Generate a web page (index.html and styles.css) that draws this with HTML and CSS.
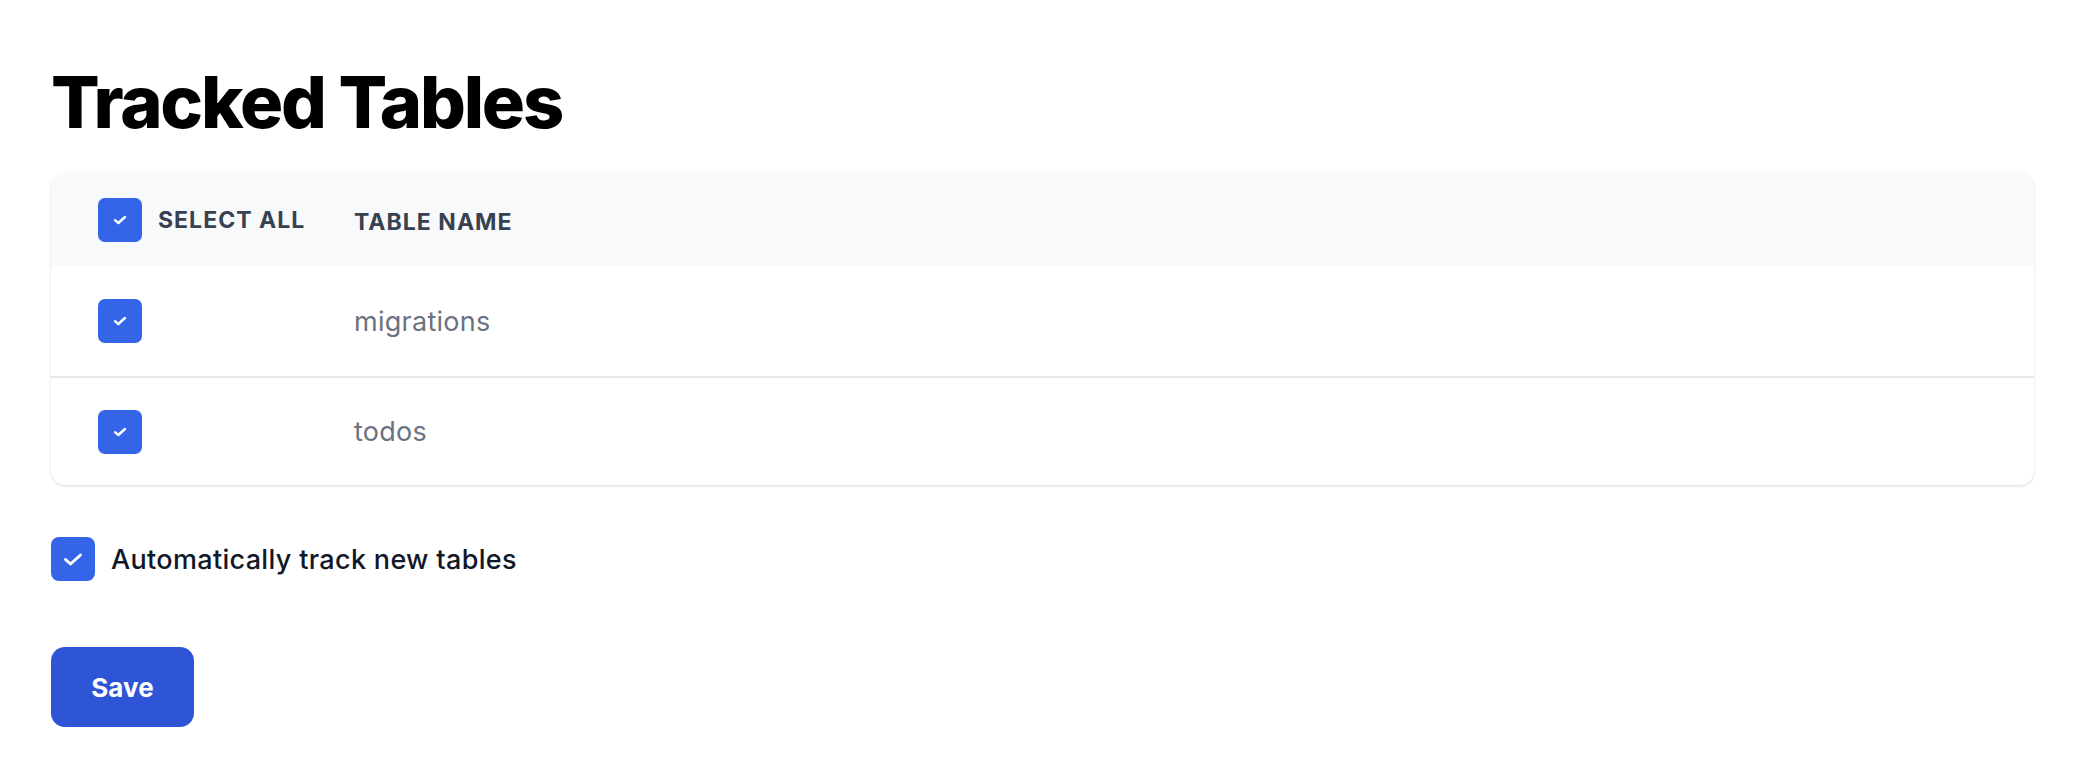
FILE: index.html
```html
<!DOCTYPE html>
<html lang="en">
<head>
<meta charset="utf-8">
<title>Tracked Tables</title>
<link rel="stylesheet" href="styles.css">
</head>
<body>
<main class="page">
  <h1 class="title">Tracked Tables</h1>
  <div class="card">
    <div class="row head">
      <div class="cell first">
        <span class="box small"><svg viewBox="0 0 14 10" width="14" height="10"><path d="M2 5.2 L5.3 8 L12 2" fill="none" stroke="#fff" stroke-width="2.4" stroke-linecap="round" stroke-linejoin="round"/></svg></span>
        <span class="head-label">SELECT ALL</span>
      </div>
      <div class="cell head-label name">TABLE NAME</div>
    </div>
    <div class="row">
      <div class="cell first">
        <span class="box small"><svg viewBox="0 0 14 10" width="14" height="10"><path d="M2 5.2 L5.3 8 L12 2" fill="none" stroke="#fff" stroke-width="2.4" stroke-linecap="round" stroke-linejoin="round"/></svg></span>
      </div>
      <div class="cell value">migrations</div>
    </div>
    <div class="row">
      <div class="cell first">
        <span class="box small"><svg viewBox="0 0 14 10" width="14" height="10"><path d="M2 5.2 L5.3 8 L12 2" fill="none" stroke="#fff" stroke-width="2.4" stroke-linecap="round" stroke-linejoin="round"/></svg></span>
      </div>
      <div class="cell value">todos</div>
    </div>
  </div>
  <label class="auto">
    <span class="box big"><svg viewBox="0 0 20 15" width="20" height="15"><path d="M2.5 7.5 L7.5 12 L17.5 3" fill="none" stroke="#fff" stroke-width="3" stroke-linecap="round" stroke-linejoin="round"/></svg></span>
    <span class="auto-text">Automatically track new tables</span>
  </label>
  <button class="save" type="button">Save</button>
</main>
</body>
</html>
```
FILE: styles.css
```css
html, body {
  margin: 0;
  background: #ffffff;
}
body {
  font-family: Inter, "Noto Sans", sans-serif;
  -webkit-font-smoothing: antialiased;
}
.page {
  padding: 62px 54px 0 51px;
  display: flex;
  flex-direction: column;
  align-items: flex-start;
}
.title {
  margin: 0;
  font-size: 72px;
  line-height: 80px;
  font-weight: 800;
  letter-spacing: -0.03em;
  color: #000;
}
.card {
  align-self: stretch;
  margin-top: 31px;
  background: #fff;
  border-radius: 14px;
  box-shadow: 0 1px 3px rgba(0,0,0,0.10), 0 1px 2px rgba(0,0,0,0.05);
  overflow: hidden;
}
.row {
  display: grid;
  grid-template-columns: 303px 1fr;
  align-items: center;
  height: 107px;
}
.row + .row {
  border-top: 2px solid #e5e7eb;
}
.row.head {
  height: 93px;
  background: #f8f9fb;
}
.row.head + .row {
  border-top: 0;
  height: 110px;
}
.cell.first {
  display: flex;
  align-items: center;
  gap: 16px;
  padding-left: 47px;
}
.box {
  display: inline-flex;
  align-items: center;
  justify-content: center;
  width: 44px;
  height: 44px;
  border-radius: 7px;
  background: #3465e8;
  flex: none;
}
.head-label {
  font-size: 23px;
  font-weight: 700;
  letter-spacing: 0.045em;
  color: #374151;
}
.name {
  padding-top: 4px;
}
.value {
  font-size: 27px;
  letter-spacing: 0.01em;
  color: #6b7280;
}
.auto {
  margin-top: 52px;
  display: flex;
  align-items: center;
  gap: 16px;
}
.box.big {
  border-radius: 8px;
}
.auto-text {
  font-size: 27px;
  font-weight: 500;
  letter-spacing: 0.012em;
  color: #111827;
}
.save {
  margin-top: 66px;
  width: 143px;
  height: 80px;
  border: 0;
  border-radius: 14px;
  background: #2d55d5;
  color: #fff;
  font-family: inherit;
  font-size: 26px;
  font-weight: 700;
  cursor: pointer;
}
```
